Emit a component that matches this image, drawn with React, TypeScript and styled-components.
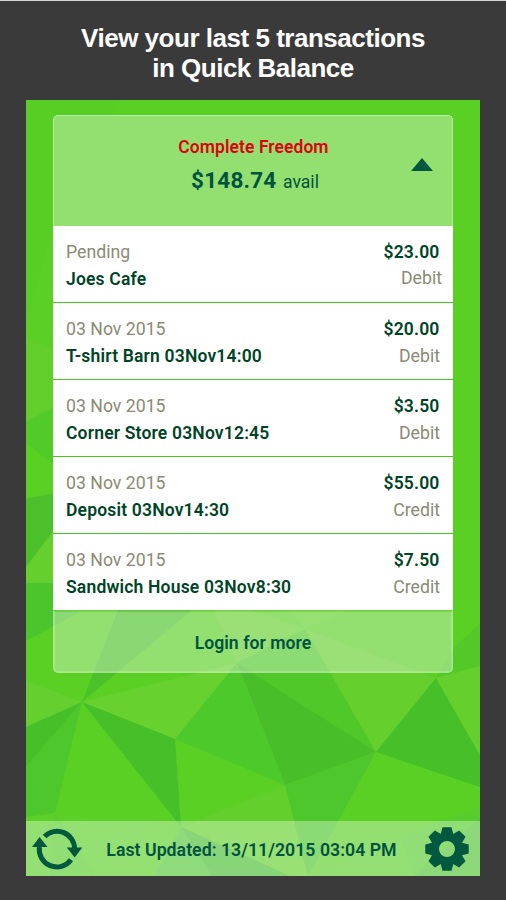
import React from "react";
import styled, { createGlobalStyle } from "styled-components";

const GlobalStyle = createGlobalStyle`
  *, *::before, *::after { box-sizing: border-box; }
  body { margin: 0; background: #3b3a3a; }
`;

const Page = styled.main`
  display: flex;
  flex-direction: column;
  align-items: center;
  width: 506px;
  height: 900px;
  overflow: hidden;
  border-top: 1px solid #d3d5d3;
  background: #3b3a3a;
`;

const Caption = styled.h1`
  flex: none;
  height: 99px;
  margin: 0;
  padding-top: 22px;
  color: #fff;
  font: 700 26px/30px "Liberation Sans", Arial, sans-serif;
  text-align: center;
  white-space: nowrap;
`;

const CaptionLine = styled.span<{ $spacing: number }>`
  display: block;
  letter-spacing: ${(p) => p.$spacing}px;
`;

const Screen = styled.section`
  position: relative;
  display: flex;
  flex: none;
  flex-direction: column;
  justify-content: space-between;
  width: 454px;
  height: 776px;
  padding-top: 15px;
  overflow: hidden;
  background: #5ad024;
  font-family: Roboto, sans-serif;
`;

const Backdrop = styled.svg`
  position: absolute;
  inset: 0;
  width: 454px;
  height: 776px;
`;

const Card = styled.article`
  position: relative;
  display: flex;
  flex-direction: column;
  width: 400px;
  height: 558px;
  margin-left: 27px;
`;

const Balance = styled.header`
  display: grid;
  grid-template-columns: 1fr 30px;
  height: 111px;
  padding: 17px 15px 0 46px;
  border: 1.5px solid #b9eba3;
  border-bottom: 0;
  border-radius: 5px 5px 0 0;
  background: #93e070;
`;

const BalanceText = styled.div`
  display: flex;
  flex-direction: column;
  align-items: center;
`;

const AccountName = styled.div`
  color: #e1000f;
  font-size: 17.5px;
  font-weight: 600;
  line-height: 28px;
  letter-spacing: 0.06px;
`;

const Available = styled.div`
  margin: 4px -3px 0 0;
  color: #00533f;
  font-size: 17.6px;
  line-height: 30px;
  white-space: nowrap;
`;

const Sum = styled.strong`
  margin-right: 6.5px;
  font-size: 22.5px;
  font-weight: 700;
  letter-spacing: 0.2px;
`;

const Chevron = styled.svg`
  align-self: start;
  justify-self: center;
  width: 22px;
  height: 13px;
  margin-top: 25px;
`;

const List = styled.ul`
  margin: 0;
  padding: 0;
  list-style: none;
  background: #fff;
`;

const Transaction = styled.li`
  display: flex;
  justify-content: space-between;
  height: 77px;
  padding: 13px 13px 0;
  border-bottom: 1px solid #45c91c;
  &:last-child {
    height: 76px;
    border-bottom: 0;
  }
`;

const Column = styled.div<{ $end?: boolean }>`
  display: flex;
  flex-direction: column;
  align-items: ${(p) => (p.$end ? "flex-end" : "flex-start")};
`;

const Muted = styled.span<{ $pending?: boolean }>`
  margin: ${(p) => (p.$pending ? "-1px -2px 0 0" : "0")};
  padding-bottom: 1px;
  color: #8b8a72;
  font-size: 17.7px;
  font-weight: 400;
  line-height: 26px;
`;

const Strong = styled.span`
  color: #004426;
  font-size: 17.5px;
  font-weight: 600;
  line-height: 27px;
  letter-spacing: 0.18px;
`;

const Amount = styled(Strong)`
  margin-right: 0.5px;
`;

const LoginButton = styled.button`
  flex: 1;
  padding: 3px 0 0;
  border: 2px solid rgba(255, 255, 255, 0.48);
  border-top-color: rgba(255, 255, 255, 0.15);
  border-radius: 0 0 5px 5px;
  background: rgba(255, 255, 255, 0.35);
  background-clip: padding-box;
  color: #00533f;
  font: 600 17.6px/26px Roboto, sans-serif;
  letter-spacing: 0.05px;
`;

const Footer = styled.footer`
  position: relative;
  display: flex;
  align-items: center;
  justify-content: space-between;
  height: 55px;
  padding: 1px 11px 0 5px;
  background: rgba(255, 255, 255, 0.35);
  color: #00533f;
`;

const Updated = styled.span`
  margin: 2px 5px 0 0;
  font-size: 17.7px;
  font-weight: 600;
  line-height: 26px;
  letter-spacing: 0.03px;
  white-space: nowrap;
`;

const Icon = styled.svg<{ $width: number }>`
  width: ${(p) => p.$width}px;
  height: 44px;
`;

const facets: [string, string][] = [
  ["26,100 120,100 53,225 46,252 26,326", "#58ce25"],
  ["26,326 46,252 54,225 54,350", "#5ccf27"],
  ["26,336 54,350 54,407 26,422", "#62ce2b"],
  ["26,422 54,407 54,465 26,443", "#52ca28"],
  ["26,499 54,493 54,530 26,567", "#4bc02a"],
  ["26,567 54,530 54,583 26,583", "#65cf2e"],
  ["26,583 54,583 54,610 80,612 26,641", "#4cc52c"],
  ["82,702 118,610 192,610", "#4cc22a"],
  ["214,610 250,610 305,629 237,663", "#66d02f"],
  ["305,629 350,610 290,610", "#5fd02a"],
  ["82,702 237,663 175,739", "#67d130"],
  ["237,663 305,629 376,752", "#50c829"],
  ["305,629 436,678 376,752", "#65cf2e"],
  ["237,663 376,752 285,785", "#48bf29"],
  ["237,663 285,785 175,739", "#4ec92b"],
  ["82,702 175,739 181,827", "#47bf29"],
  ["436,678 480,755 480,787 376,752", "#47bf28"],
  ["436,678 480,666 480,755", "#65cf2e"],
  ["436,678 452,650 480,623 480,666", "#52c927"],
  ["26,681 82,702 26,727", "#66cf30"],
  ["26,727 82,702 26,767", "#47bf29"],
  ["26,767 82,702 55,813 26,817", "#4dc72b"],
  ["26,817 55,813 181,827 155,876 26,876", "#5ccf28"],
  ["55,813 95,876 50,876", "#57cc2b"],
  ["181,827 285,785 308,876 290,876", "#63cf2c"],
  ["181,827 155,876 212,876", "#50c837"],
  ["181,827 290,876 212,876", "#49bd30"],
  ["285,785 376,752 308,876", "#4dc72b"],
  ["308,876 400,837 480,807 480,876", "#57cd2d"],
  ["308,876 400,837 414,876", "#5cd02a"],
  ["414,876 480,818 480,876", "#50c533"],
];

const transactions = [
  { date: "Pending", name: "Joes Cafe", amount: "$23.00", kind: "Debit", pending: true },
  { date: "03 Nov 2015", name: "T-shirt Barn 03Nov14:00", amount: "$20.00", kind: "Debit" },
  { date: "03 Nov 2015", name: "Corner Store 03Nov12:45", amount: "$3.50", kind: "Debit" },
  { date: "03 Nov 2015", name: "Deposit 03Nov14:30", amount: "$55.00", kind: "Credit" },
  { date: "03 Nov 2015", name: "Sandwich House 03Nov8:30", amount: "$7.50", kind: "Credit" },
];

const teeth = [0, 45, 90, 135, 180, 225, 270, 315];

export default function App() {
  return (
    <Page>
      <GlobalStyle />
      <Caption>
        <CaptionLine $spacing={-0.48}>View your last 5 transactions</CaptionLine>
        <CaptionLine $spacing={-0.5}>in Quick Balance</CaptionLine>
      </Caption>
      <Screen>
        <Backdrop viewBox="26 100 454 776" aria-hidden="true">
          {facets.map(([points, fill]) => (
            <polygon key={points} points={points} fill={fill} />
          ))}
        </Backdrop>
        <Card>
          <Balance>
            <BalanceText>
              <AccountName>Complete Freedom</AccountName>
              <Available>
                <Sum>$148.74</Sum>avail
              </Available>
            </BalanceText>
            <Chevron viewBox="0 0 22 13">
              <path d="M11 0 22 13H0Z" fill="#00583f" />
            </Chevron>
          </Balance>
          <List>
            {transactions.map((t) => (
              <Transaction key={t.name}>
                <Column>
                  <Muted>{t.date}</Muted>
                  <Strong>{t.name}</Strong>
                </Column>
                <Column $end>
                  <Amount>{t.amount}</Amount>
                  <Muted $pending={t.pending}>{t.kind}</Muted>
                </Column>
              </Transaction>
            ))}
          </List>
          <LoginButton>Login for more</LoginButton>
        </Card>
        <Footer>
          <Icon $width={52} viewBox="31 827 52 44">
            <g fill="none" stroke="#00583f" strokeWidth="5">
              <path d="M44.6 836.4A17.6 17.6 0 0 1 74.6 849" />
              <path d="M39.4 847A17.6 17.6 0 0 0 71 859.8" />
            </g>
            <path d="M39.6 837 47.5 847H32ZM74.7 857.5 66.8 847.5H82.3Z" fill="#00583f" />
          </Icon>
          <Updated>Last Updated: 13/11/2015 03:04 PM</Updated>
          <Icon $width={44} viewBox="-22 -22 44 44">
            <circle r="12" fill="none" stroke="#00583f" strokeWidth="8" />
            {teeth.map((angle) => (
              <path key={angle} d="M-6.5-14-4.5-21.7H4.5L6.5-14Z" fill="#00583f" transform={`rotate(${angle})`} />
            ))}
          </Icon>
        </Footer>
      </Screen>
    </Page>
  );
}
